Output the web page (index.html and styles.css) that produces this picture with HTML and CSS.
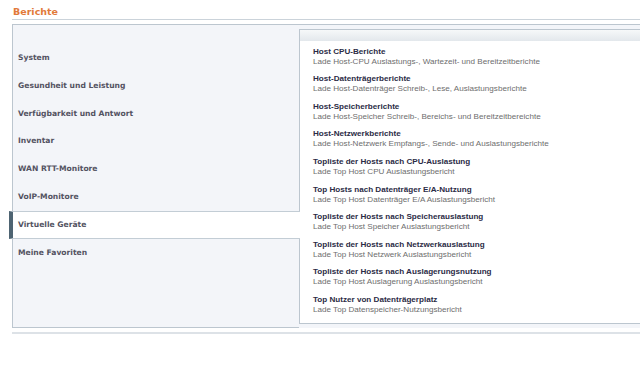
FILE: index.html
```html
<!DOCTYPE html>
<html lang="de">
<head>
    <meta charset="UTF-8">
    <meta name="viewport" content="width=device-width, initial-scale=1.0">
    <title>Berichte</title>
    <link rel="stylesheet" href="styles.css">
</head>
<body>
    <div id="reports-page">
        <h2 class="section-title">Berichte</h2>

        <div class="reports">
            <ul class="nav">
                <li class="nav-item">System</li>
                <li class="nav-item">Gesundheit und Leistung</li>
                <li class="nav-item">Verfügbarkeit und Antwort</li>
                <li class="nav-item">Inventar</li>
                <li class="nav-item">WAN RTT-Monitore</li>
                <li class="nav-item">VoIP-Monitore</li>
                <li class="nav-item active">Virtuelle Geräte</li>
                <li class="nav-item">Meine Favoriten</li>
            </ul>

            <div class="panel">
                <div class="panel-head"></div>
                <ul class="report-list">
                    <li class="report">
                        <div class="report-name">Host CPU-Berichte</div>
                        <div class="report-desc">Lade Host-CPU Auslastungs-, Wartezeit- und Bereitzeitberichte</div>
                    </li>
                    <li class="report">
                        <div class="report-name">Host-Datenträgerberichte</div>
                        <div class="report-desc">Lade Host-Datenträger Schreib-, Lese, Auslastungsberichte</div>
                    </li>
                    <li class="report">
                        <div class="report-name">Host-Speicherberichte</div>
                        <div class="report-desc">Lade Host-Speicher Schreib-, Bereichs- und Bereitzeitbereichte</div>
                    </li>
                    <li class="report">
                        <div class="report-name">Host-Netzwerkberichte</div>
                        <div class="report-desc">Lade Host-Netzwerk Empfangs-, Sende- und Auslastungsberichte</div>
                    </li>
                    <li class="report">
                        <div class="report-name">Topliste der Hosts nach CPU-Auslastung</div>
                        <div class="report-desc">Lade Top Host CPU Auslastungsbericht</div>
                    </li>
                    <li class="report">
                        <div class="report-name">Top Hosts nach Datenträger E/A-Nutzung</div>
                        <div class="report-desc">Lade Top Host Datenträger E/A Auslastungsbericht</div>
                    </li>
                    <li class="report">
                        <div class="report-name">Topliste der Hosts nach Speicherauslastung</div>
                        <div class="report-desc">Lade Top Host Speicher Auslastungsbericht</div>
                    </li>
                    <li class="report">
                        <div class="report-name">Topliste der Hosts nach Netzwerkauslastung</div>
                        <div class="report-desc">Lade Top Host Netzwerk Auslastungsbericht</div>
                    </li>
                    <li class="report">
                        <div class="report-name">Topliste der Hosts nach Auslagerungsnutzung</div>
                        <div class="report-desc">Lade Top Host Auslagerung Auslastungsbericht</div>
                    </li>
                    <li class="report">
                        <div class="report-name">Top Nutzer von Datenträgerplatz</div>
                        <div class="report-desc">Lade Top Datenspeicher-Nutzungsbericht</div>
                    </li>
                </ul>
            </div>
        </div>

        <div class="footer-line"></div>
    </div>
</body>
</html>
```

FILE: styles.css
```css
body {
    margin: 0;
    background-color: #ffffff;
    font-family: 'Liberation Sans', Arial, sans-serif;
}

#reports-page {
    padding-left: 12px;
}

.section-title {
    margin: 0 0 4px 0;
    padding: 6px 1px 1px 1px;
    font-family: 'DejaVu Sans', Verdana, sans-serif;
    font-size: 9.5px;
    line-height: 12px;
    font-weight: bold;
    color: #e27a3a;
    border-bottom: 1px solid #cbd3da;
}

.reports {
    display: flex;
    border-top: 1px solid #bcc6cf;
    background-color: #f3f5f9;
}

.nav {
    list-style: none;
    margin: 0;
    padding: 19px 0 0 0;
    width: 286px;
    height: 283.4px;
    border-left: 1px solid #bcc6cf;
    border-bottom: 1px solid #bcc6cf;
    font-family: 'DejaVu Sans', Verdana, sans-serif;
    font-size: 7.6px;
    font-weight: bold;
    color: #535362;
}

.nav-item {
    box-sizing: border-box;
    height: 27.8px;
    line-height: 27.8px;
    padding-left: 5px;
}

.nav-item.active {
    position: relative;
    z-index: 1;
    margin-left: -4px;
    margin-right: -1px;
    padding-left: 5px;
    line-height: 25.8px;
    background-color: #ffffff;
    border-left: 4px solid #4e6472;
    border-top: 1px solid #c3cdd5;
    border-bottom: 1px solid #c3cdd5;
}

.panel {
    flex: 1;
    margin: 4px 0 4px 0;
    background-color: #ffffff;
    border: 1px solid #bcc6cf;
    border-right: none;
}

.panel-head {
    height: 11px;
    background: linear-gradient(to bottom, #f6f8f9, #e3e8ec);
}

.report-list {
    list-style: none;
    margin: 0;
    padding: 5.7px 0 0 13px;
}

.report {
    margin-bottom: 7.6px;
    font-size: 8.1px;
    line-height: 10px;
}

.report-name {
    font-weight: bold;
    color: #2b2b45;
}

.report-desc {
    color: #6e6e6e;
}

.footer-line {
    margin-top: 4px;
    height: 2px;
    background-color: #dde2e7;
}
```
